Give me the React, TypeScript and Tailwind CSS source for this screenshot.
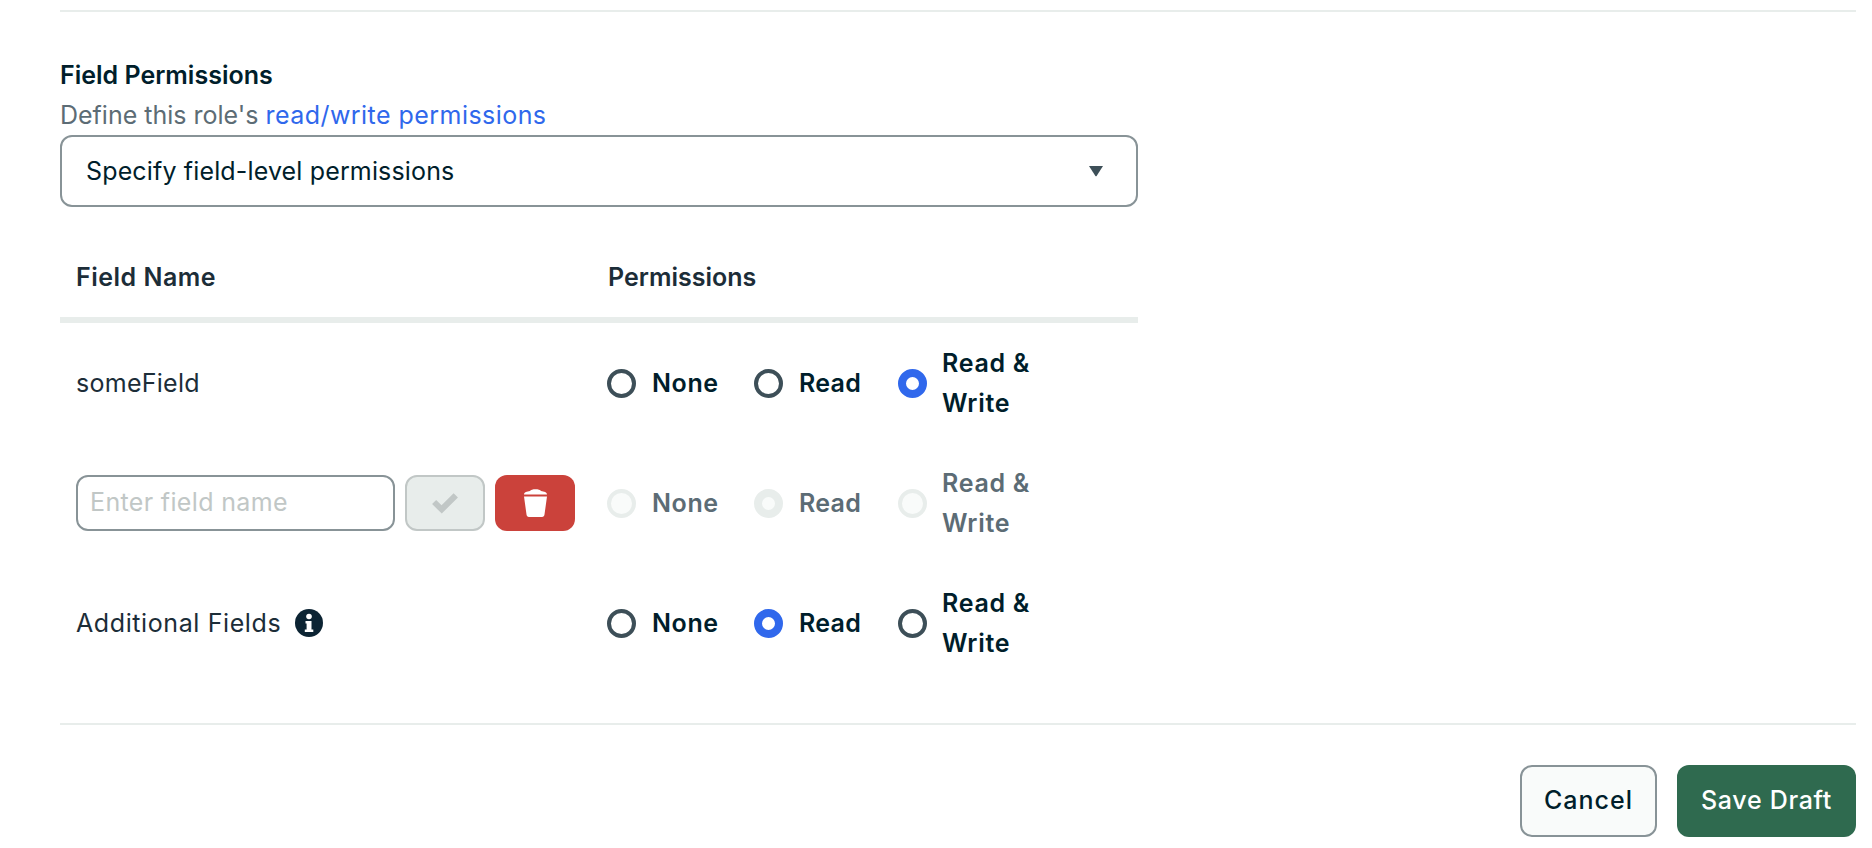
const font = "[font-family:Inter,'Liberation_Sans',sans-serif]";

type State = "off" | "on" | "disabled" | "disabledOn";

function Radio({ state }: { state: State }) {
  const cls = {
    off: "border-[4px] border-[#3d4f58] bg-white",
    on: "border-[8px] border-[#3068ec] bg-white",
    disabled: "border-[4px] border-[#e8edeb] bg-[#f9fbfa]",
    disabledOn: "border-[8px] border-[#e8edeb] bg-[#f9fbfa]",
  }[state];
  return <span className={`h-[29px] w-[29px] shrink-0 rounded-full ${cls}`} />;
}

function Option({ label, state, dim, wide, track }: { label: string; state: State; dim?: boolean; wide?: boolean; track: string }) {
  return (
    <label className={`flex items-center ${wide ? "gap-[15px]" : "gap-4"}`}>
      <Radio state={state} />
      <span className={`text-[25px] leading-10 font-semibold ${track} ${wide ? "w-[100px]" : ""} ${dim ? "text-[#5c6c75]" : "text-[#001e2b]"}`}>{label}</span>
    </label>
  );
}

function Options({ values, dim }: { values: State[]; dim?: boolean }) {
  return (
    <div className="grid grid-cols-[147px_144px_1fr] items-center">
      <Option label="None" state={values[0]} dim={dim} track="tracking-[0.6px]" />
      <Option label="Read" state={values[1]} dim={dim} track="tracking-[0.3px]" />
      <Option label="Read & Write" state={values[2]} dim={dim} wide track="tracking-[0.7px]" />
    </div>
  );
}

function Row({ left, values, dim }: { left: React.ReactNode; values: State[]; dim?: boolean }) {
  return (
    <div className="grid h-[120px] grid-cols-[531px_1fr] items-center pl-4">
      <div className="flex items-center">{left}</div>
      <Options values={values} dim={dim} />
    </div>
  );
}

export default function App() {
  return (
    <div className={`h-[848px] w-[1872px] overflow-hidden bg-white pt-[10px] pr-4 pl-[60px] text-[#1c2d38] ${font}`}>
      <div className="h-0.5 bg-[#e8edeb]" />
      <h2 className="mt-[43px] text-[25px] leading-10 font-semibold text-[#001e2b]">Field Permissions</h2>
      <p className="text-[25px] leading-10 text-[#5c6c75]">
        Define this role's <a className="tracking-[0.45px] text-[#2f68ec]">read/write permissions</a>
      </p>
      <div className="w-[1078px]">
        <button className="flex h-[72px] w-full items-center justify-between rounded-xl border-2 border-[#889397] pr-[32px] pl-6 text-[25px] tracking-[0.15px] text-[#001e2b]">
          <span className="pt-0.5">Specify field-level permissions</span>
          <svg width="16" height="12" viewBox="0 0 16 12">
            <path d="M1 1h14L8.600 11a.8.8 0 0 1-1.200 0z" fill="#3d4f58" />
          </svg>
        </button>
        <div className="mt-[29px] grid h-[87px] grid-cols-[531px_1fr] items-center border-b-[6px] border-[#e8edeb] pt-[3px] pl-4 text-[25px] font-semibold">
          <span className="tracking-[0.5px]">Field Name</span>
          <span className="pl-px">Permissions</span>
        </div>
        <Row left={<span className="pt-px text-[25px] tracking-[0.27px]">someField</span>} values={["off", "off", "on"]} />
        <Row
          dim
          left={
            <div className="flex gap-[10px]">
              <input
                placeholder="Enter field name"
                className="h-14 w-[319px] rounded-xl border-2 border-[#889397] bg-white px-3 pb-0.5 text-[25px] tracking-[0.35px] outline-none placeholder:text-[#c1c7c6]"
              />
              <button className="flex h-14 w-20 items-center justify-center rounded-xl border-2 border-[#c1c7c6] bg-[#e8edeb]">
                <svg width="28" height="24" viewBox="0 0 26 22">
                  <path d="M1 12l3.800-3.800 5 5L21 2l4 3.800L10 20.800z" fill="#c1c7c6" />
                </svg>
              </button>
              <button className="flex h-14 w-20 items-center justify-center rounded-xl bg-[#cb423b]">
                <svg width="25" height="28" viewBox="0 0 25 28">
                  <path d="M1 5.500C1 3 4 2.500 7 2c1-2.500 10-2.500 11 0 3 .5 6 1 6 3.500z" fill="#fff" />
                  <path d="M1 7.500h23l-2.500 18c-.2 1.500-1 2.500-2.500 2.500H6c-1.500 0-2.300-1-2.500-2.500z" fill="#fff" />
                </svg>
              </button>
            </div>
          }
          values={["disabled", "disabledOn", "disabled"]}
        />
        <Row
          left={
            <>
              <span className="pt-px text-[25px] tracking-[0.6px]">Additional Fields</span>
              <svg className="ml-[14px]" width="28" height="28" viewBox="0 0 28 28">
                <circle cx="14" cy="14" r="14" fill="#0c2433" />
                <circle cx="14" cy="7.500" r="2.800" fill="#fff" />
                <path d="M10.500 12h6v8.500h1.800V23H9.800v-2.500h1.800v-6h-1.100z" fill="#fff" />
              </svg>
            </>
          }
          values={["off", "on", "off"]}
        />
      </div>
      <div className="mt-[40px] h-0.5 bg-[#e8edeb]" />
      <div className="mt-10 flex justify-end gap-5">
        <button className="h-[72px] w-[137px] rounded-xl border-2 border-[#889397] bg-[#f9fbfa] text-[25px] font-medium tracking-[1px] text-[#001e2b]">Cancel</button>
        <button className="h-[72px] w-[179px] rounded-xl bg-[#2f6a4f] text-[25px] font-medium tracking-[0.7px] text-white">Save Draft</button>
      </div>
    </div>
  );
}
